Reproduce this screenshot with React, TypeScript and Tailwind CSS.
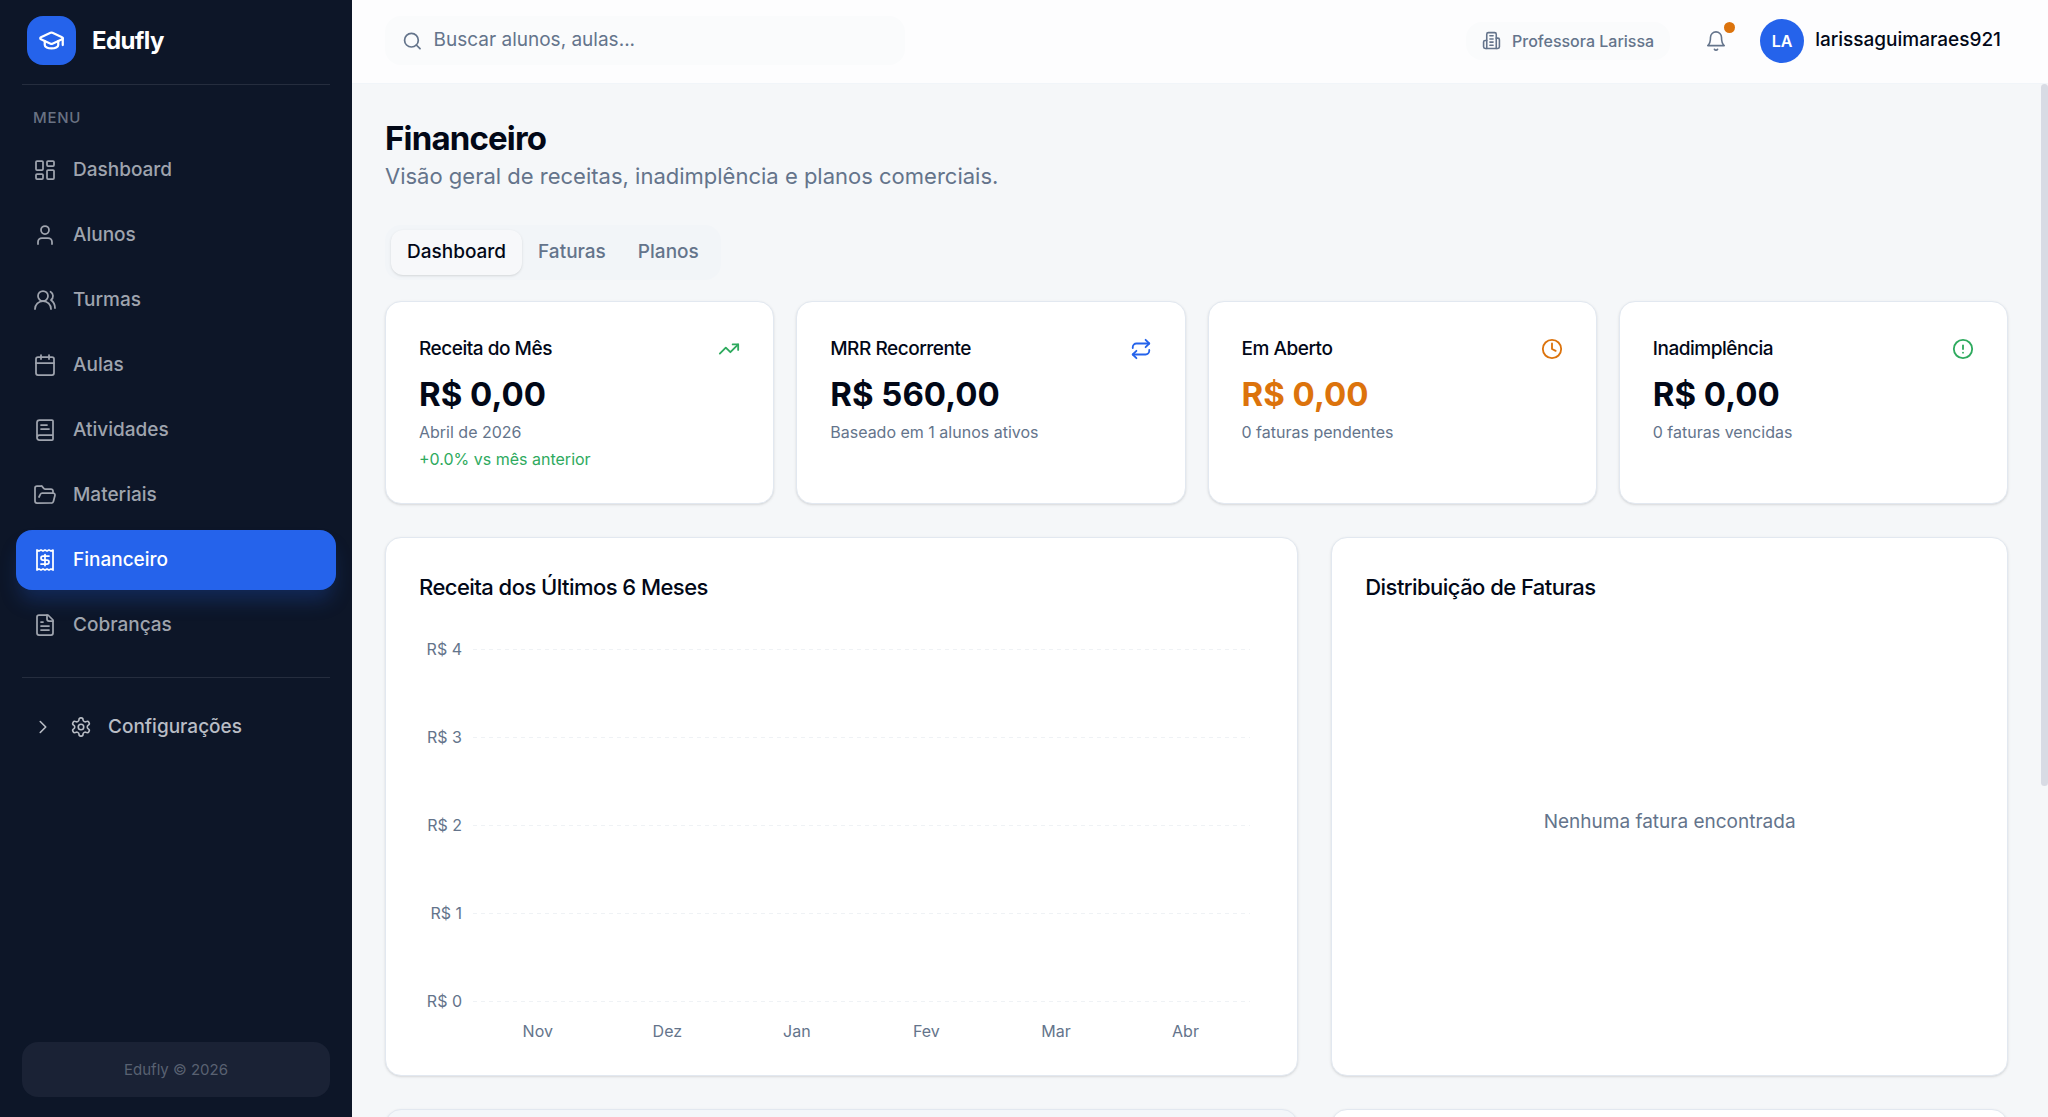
import { useState } from "react";
import type { ReactNode } from "react";
import {
  BookText,
  Calendar,
  ChevronRight,
  CircleAlert,
  Clock,
  FolderOpen,
  GraduationCap,
  LayoutDashboard,
  Repeat,
  Search,
  TrendingUp,
  User,
  UsersRound,
} from "lucide-react";

interface IconProps {
  size?: number;
  strokeWidth?: number;
}

function Svg({ size = 24, strokeWidth = 2, children }: IconProps & { children: ReactNode }) {
  return (
    <svg
      width={size}
      height={size}
      viewBox="0 0 24 24"
      fill="none"
      stroke="currentColor"
      strokeWidth={strokeWidth}
      strokeLinecap="round"
      strokeLinejoin="round"
      aria-hidden="true"
    >
      {children}
    </svg>
  );
}

const ReceiptIcon = (props: IconProps) => (
  <Svg {...props}>
    <path d="M4 2v20l2-1 2 1 2-1 2 1 2-1 2 1 2-1 2 1V2l-2 1-2-1-2 1-2-1-2 1-2-1-2 1Z" />
    <path d="M16 8h-6a2 2 0 1 0 0 4h4a2 2 0 1 1 0 4H8" />
    <path d="M12 17.5v-11" />
  </Svg>
);

const FileIcon = (props: IconProps) => (
  <Svg {...props}>
    <path d="M15 2H6a2 2 0 0 0-2 2v16a2 2 0 0 0 2 2h12a2 2 0 0 0 2-2V7Z" />
    <path d="M14 2v4a2 2 0 0 0 2 2h4" />
    <path d="M10 9H8M16 13H8M16 17H8" />
  </Svg>
);

const GearIcon = (props: IconProps) => (
  <Svg {...props}>
    <path d="M12.22 2h-.44a2 2 0 0 0-2 2v.18a2 2 0 0 1-1 1.73l-.43.25a2 2 0 0 1-2 0l-.15-.08a2 2 0 0 0-2.73.73l-.22.38a2 2 0 0 0 .73 2.73l.15.1a2 2 0 0 1 1 1.72v.51a2 2 0 0 1-1 1.74l-.15.09a2 2 0 0 0-.73 2.73l.22.38a2 2 0 0 0 2.73.73l.15-.08a2 2 0 0 1 2 0l.43.25a2 2 0 0 1 1 1.73V20a2 2 0 0 0 2 2h.44a2 2 0 0 0 2-2v-.18a2 2 0 0 1 1-1.73l.43-.25a2 2 0 0 1 2 0l.15.08a2 2 0 0 0 2.73-.73l.22-.39a2 2 0 0 0-.73-2.73l-.15-.08a2 2 0 0 1-1-1.74v-.5a2 2 0 0 1 1-1.74l.15-.09a2 2 0 0 0 .73-2.73l-.22-.38a2 2 0 0 0-2.73-.73l-.15.08a2 2 0 0 1-2 0l-.43-.25a2 2 0 0 1-1-1.73V4a2 2 0 0 0-2-2z" />
    <circle cx="12" cy="12" r="3" />
  </Svg>
);

const BuildingIcon = (props: IconProps) => (
  <Svg {...props}>
    <path d="M6 22V4a2 2 0 0 1 2-2h8a2 2 0 0 1 2 2v18Z" />
    <path d="M6 12H4a2 2 0 0 0-2 2v6a2 2 0 0 0 2 2h2" />
    <path d="M18 9h2a2 2 0 0 1 2 2v9a2 2 0 0 1-2 2h-2" />
    <path d="M10 6h4M10 10h4M10 14h4M10 18h4" />
  </Svg>
);

const BellIcon = (props: IconProps) => (
  <Svg {...props}>
    <path d="M6 8a6 6 0 0 1 12 0c0 7 3 9 3 9H3s3-2 3-9" />
    <path d="M10.3 21a1.94 1.94 0 0 0 3.4 0" />
  </Svg>
);

const menu = [
  { label: "Dashboard", icon: LayoutDashboard },
  { label: "Alunos", icon: User },
  { label: "Turmas", icon: UsersRound },
  { label: "Aulas", icon: Calendar },
  { label: "Atividades", icon: BookText },
  { label: "Materiais", icon: FolderOpen },
  { label: "Financeiro", icon: ReceiptIcon },
  { label: "Cobranças", icon: FileIcon },
];

const stats = [
  {
    title: "Receita do Mês",
    value: "R$ 0,00",
    note: "Abril de 2026",
    trend: "+0.0% vs mês anterior",
    icon: TrendingUp,
    iconColor: "text-[#2eaa5e]",
    valueColor: "text-[#020817]",
  },
  {
    title: "MRR Recorrente",
    value: "R$ 560,00",
    note: "Baseado em 1 alunos ativos",
    icon: Repeat,
    iconColor: "text-[#2563eb]",
    valueColor: "text-[#020817]",
  },
  {
    title: "Em Aberto",
    value: "R$ 0,00",
    note: "0 faturas pendentes",
    icon: Clock,
    iconColor: "text-[#dc730c]",
    valueColor: "text-[#dc730c]",
  },
  {
    title: "Inadimplência",
    value: "R$ 0,00",
    note: "0 faturas vencidas",
    icon: CircleAlert,
    iconColor: "text-[#2eaa5e]",
    valueColor: "text-[#020817]",
  },
];

const tabs = ["Dashboard", "Faturas", "Planos"];
const ticks = ["R$ 4", "R$ 3", "R$ 2", "R$ 1", "R$ 0"];
const months = ["Nov", "Dez", "Jan", "Fev", "Mar", "Abr"];

const card = "rounded-2xl border border-[#e2e8f0] bg-white shadow-sm";

function Sidebar() {
  return (
    <aside className="flex w-[352px] shrink-0 flex-col bg-[#0d1628]">
      <div className="mx-[22px] flex h-[85px] items-center gap-4 border-b border-white/10 px-[5px] pb-[3px]">
        <div className="flex size-[49px] items-center justify-center rounded-2xl bg-[#2563eb]">
          <GraduationCap size={27} className="text-white" />
        </div>
        <span className="text-2xl font-bold tracking-tight text-white">Edufly</span>
      </div>

      <nav className="px-4 pt-[22px]">
        <p className="mb-[11px] px-[17px] text-[15px] leading-[22px] font-medium tracking-wider text-[#697283]">
          MENU
        </p>
        <ul className="space-y-[5px]">
          {menu.map(({ label, icon: Icon }) => (
            <li key={label}>
              <a
                href="#"
                className={
                  label === "Financeiro"
                    ? "flex h-[60px] items-center gap-4 rounded-2xl bg-[#2563eb] px-[17px] text-[19px] font-medium text-white shadow-[0_14px_20px_-4px_rgba(37,99,235,0.25)]"
                    : "flex h-[60px] items-center gap-4 rounded-2xl px-[17px] text-[19px] font-medium text-[#9fa4ae]"
                }
              >
                <Icon size={24} strokeWidth={1.75} />
                {label}
              </a>
            </li>
          ))}
        </ul>
      </nav>

      <div className="mx-[22px] mt-[22px] border-t border-white/10 pt-[22px]">
        <button className="flex h-[54px] w-full items-center gap-4 px-[10px] text-[19px] font-medium text-[#b9bdc5]">
          <ChevronRight size={22} strokeWidth={1.75} />
          <GearIcon size={22} strokeWidth={1.75} />
          Configurações
        </button>
      </div>

      <div className="mx-[22px] mt-auto mb-5 rounded-2xl bg-[#1a2235] py-4 text-center text-[15px] leading-[23px] text-[#596171]">
        Edufly © 2026
      </div>
    </aside>
  );
}

function Header() {
  return (
    <header className="flex h-[84px] shrink-0 items-center justify-between border-b border-slate-100 bg-[#fdfdfe] px-[33px] pb-[2px]">
      <label className="flex h-[49px] w-[520px] items-center gap-[11px] rounded-2xl bg-[#fafbfc] px-[17px]">
        <Search size={22} className="text-[#64748b]" />
        <input
          type="text"
          aria-label="Buscar"
          placeholder="Buscar alunos, aulas..."
          className="w-full bg-transparent text-[19px] outline-none placeholder:text-[#64748b]"
        />
      </label>

      <div className="flex items-center">
        <div className="flex h-[38px] items-center gap-[11px] rounded-2xl bg-[#fafbfc] px-4 text-base font-medium text-[#64748b]">
          <BuildingIcon size={19} />
          Professora Larissa
        </div>
        <button aria-label="Notificações" className="relative ml-6 flex size-[44px] items-center justify-center text-[#64748b]">
          <BellIcon size={22} strokeWidth={1.75} />
          <span className="absolute top-[3px] right-[3px] size-[11px] rounded-full bg-[#dc730c]" />
        </button>
        <button className="ml-[22px] flex items-center gap-[11px] pr-[14px] text-[19px] font-medium text-[#020817]">
          <span className="flex size-[44px] items-center justify-center rounded-full bg-[#2563eb] text-base font-semibold text-white">
            LA
          </span>
          larissaguimaraes921
        </button>
      </div>
    </header>
  );
}

function RevenueChart() {
  return (
    <div className="mt-[33px] flex h-[406px] flex-col pt-0.5 pr-[14px] text-base text-[#64748b]">
      <div className="flex flex-1 flex-col justify-between">
        {ticks.map((tick) => (
          <div key={tick} className="flex h-[22px] items-center gap-[11px]">
            <span className="w-[43px] text-right whitespace-nowrap">{tick}</span>
            <svg className="h-px flex-1">
              <line x1="0" y1="0.5" x2="100%" y2="0.5" stroke="#eff2f5" strokeWidth="1" strokeDasharray="4 4" />
            </svg>
          </div>
        ))}
      </div>
      <div className="mt-2 grid grid-cols-6 pl-[54px] text-center leading-[22px]">
        {months.map((month) => (
          <span key={month}>{month}</span>
        ))}
      </div>
    </div>
  );
}

export default function App() {
  const [tab, setTab] = useState("Dashboard");

  return (
    <div className="flex h-screen bg-[#f5f7f9] font-[Inter,sans-serif] text-[#020817] antialiased">
      <Sidebar />
      <div className="flex min-w-0 flex-1 flex-col">
        <Header />
        <div className="flex min-h-0 flex-1">
          <main className="min-w-0 flex-1 overflow-y-auto p-[33px] [scrollbar-width:none]">
            <h1 className="text-[33px] leading-[43px] font-bold tracking-tight">Financeiro</h1>
            <p className="text-[22px] leading-8 text-[#64748b]">
              Visão geral de receitas, inadimplência e planos comerciais.
            </p>

            <div role="tablist" className="mt-[33px] inline-flex h-[55px] items-center rounded-2xl bg-[#f2f5f8] px-1.5">
              {tabs.map((name) => (
                <button
                  key={name}
                  role="tab"
                  aria-selected={tab === name}
                  onClick={() => setTab(name)}
                  className={
                    tab === name
                      ? "h-[45px] rounded-xl bg-[#f7f8fa] px-4 text-[19px] font-medium shadow-sm"
                      : "h-[45px] rounded-xl px-4 text-[19px] font-medium text-[#64748b]"
                  }
                >
                  {name}
                </button>
              ))}
            </div>

            {/* Summary cards */}
            <div className="mt-[21px] grid grid-cols-4 gap-[22px]">
              {stats.map(({ title, value, note, trend, icon: Icon, iconColor, valueColor }) => (
                <section key={title} className={`${card} p-[33px]`}>
                  <div className="flex items-center justify-between">
                    <h2 className="text-[19px] leading-[27px] font-medium tracking-tight">{title}</h2>
                    <Icon size={22} className={iconColor} />
                  </div>
                  <p className={`mt-[11px] text-[33px] leading-[43px] font-bold ${valueColor}`}>{value}</p>
                  <p className="mt-[5px] text-base leading-[22px] text-[#64748b]">{note}</p>
                  {trend && <p className="mt-[5px] text-base leading-[22px] text-[#2eaa5e]">{trend}</p>}
                </section>
              ))}
            </div>

            <div className="mt-[33px] grid grid-cols-7 gap-[33px]">
              <section className={`${card} col-span-4 p-[33px]`}>
                <h2 className="text-[22px] leading-8 font-medium tracking-tight">Receita dos Últimos 6 Meses</h2>
                <RevenueChart />
              </section>
              <section className={`${card} col-span-3 flex flex-col p-[33px]`}>
                <h2 className="text-[22px] leading-8 font-medium tracking-tight">Distribuição de Faturas</h2>
                <p className="flex flex-1 items-center justify-center text-[19px] text-[#64748b]">
                  Nenhuma fatura encontrada
                </p>
              </section>
              <section className="col-span-4 h-[387px] rounded-2xl border border-[#e2e8f0] bg-[#f3f6f9] shadow-sm" />
              <section className={`${card} col-span-3 h-[387px]`} />
            </div>
          </main>
          <div aria-hidden="true" className="w-[7px] shrink-0">
            <div className="h-[68%] rounded-full bg-[#d8dbe4]" />
          </div>
        </div>
      </div>
    </div>
  );
}
